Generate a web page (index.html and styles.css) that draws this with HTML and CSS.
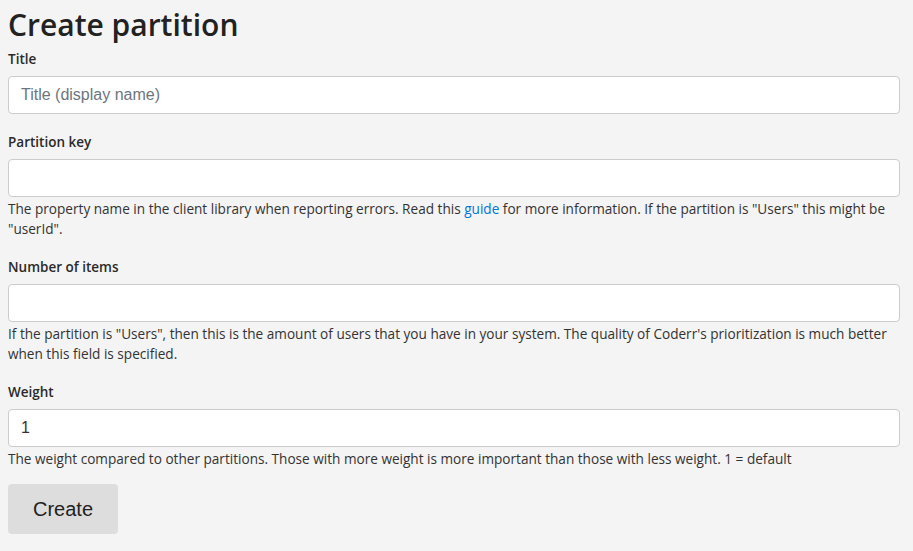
FILE: index.html
```html
<!DOCTYPE html>
<html>
<head>
<meta charset="utf-8">
<link rel="stylesheet" href="styles.css">
</head>
<body>
<div class="page">
  <h1 class="title">Create partition</h1>
  <form class="form">
    <div class="group">
      <label class="label">Title</label>
      <input class="input" type="text" placeholder="Title (display name)">
    </div>
    <div class="group">
      <label class="label">Partition key</label>
      <input class="input" type="text">
      <p class="help">The property name in the client library when reporting errors. Read this <a class="link" href="#">guide</a> for more information. If the partition is "Users" this might be "userId".</p>
    </div>
    <div class="group">
      <label class="label">Number of items</label>
      <input class="input" type="text">
      <p class="help">If the partition is "Users", then this is the amount of users that you have in your system. The quality of Coderr's prioritization is much better when this field is specified.</p>
    </div>
    <div class="group">
      <label class="label">Weight</label>
      <input class="input" type="text" value="1">
      <p class="help">The weight compared to other partitions. Those with more weight is more important than those with less weight. 1 = default</p>
    </div>
    <button class="button" type="button">Create</button>
  </form>
</div>
</body>
</html>
```
FILE: styles.css
```css
html, body {
  margin: 0;
  padding: 0;
  background: #f4f4f4;
}
body {
  font-family: "Open Sans", "Noto Sans", sans-serif;
  color: #212529;
}
.page {
  padding: 8px 13px 0 8px;
}
.title {
  margin: 0 0 6px;
  font-size: 30px;
  font-weight: 600;
  line-height: 34px;
  color: #222;
}
.form {
  display: flex;
  flex-direction: column;
  gap: 17px;
  align-items: flex-start;
}
.group {
  display: flex;
  flex-direction: column;
  width: 100%;
}
.label {
  font-size: 13.5px;
  font-weight: 600;
  line-height: 20px;
  padding-top: 1px;
  margin-bottom: 7px;
  color: #2a2a2a;
}
.input {
  box-sizing: border-box;
  height: 38px;
  width: 100%;
  margin: 0;
  padding: 6px 12px;
  border: 1px solid #ccc;
  border-radius: 4px;
  background: #fff;
  font-family: "Liberation Sans", Arial, sans-serif;
  font-size: 16px;
  color: #333;
}
.input::placeholder {
  color: #6c757d;
}
.help {
  margin: 2px 0 0;
  font-size: 13.6px;
  line-height: 20px;
  color: #333;
}
.link {
  color: #0275d8;
  text-decoration: none;
}
.button {
  margin-top: -2px;
  width: 110px;
  height: 50px;
  border: 0;
  border-radius: 4px;
  background: #ddd;
  font-family: "Liberation Sans", Arial, sans-serif;
  font-size: 20px;
  color: #222;
}
```
